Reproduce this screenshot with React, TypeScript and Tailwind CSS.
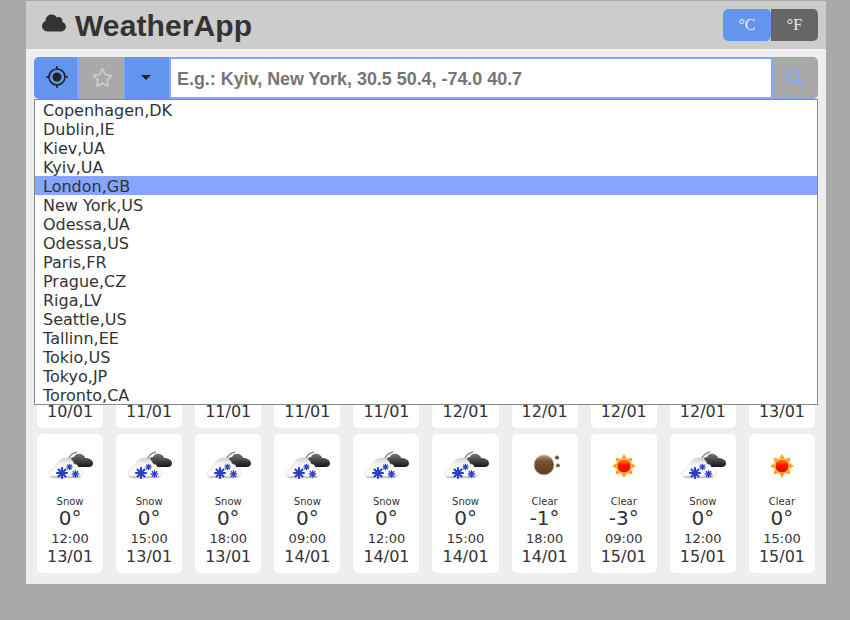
import { FaCloud, FaRegStar } from "react-icons/fa";

const cities = [
  "Copenhagen,DK",
  "Dublin,IE",
  "Kiev,UA",
  "Kyiv,UA",
  "London,GB",
  "New York,US",
  "Odessa,UA",
  "Odessa,US",
  "Paris,FR",
  "Prague,CZ",
  "Riga,LV",
  "Seattle,US",
  "Tallinn,EE",
  "Tokio,US",
  "Tokyo,JP",
  "Toronto,CA",
];

type Forecast = { kind: "snow" | "moon" | "sun"; label: string; temp: string; time: string; date: string };

const snow = (time: string, date: string): Forecast => ({ kind: "snow", label: "Snow", temp: "0°", time, date });

const topRow: Forecast[] = [
  snow("21:00", "10/01"),
  snow("09:00", "11/01"),
  snow("12:00", "11/01"),
  snow("15:00", "11/01"),
  snow("18:00", "11/01"),
  snow("09:00", "12/01"),
  snow("12:00", "12/01"),
  snow("15:00", "12/01"),
  snow("18:00", "12/01"),
  snow("09:00", "13/01"),
];

const bottomRow: Forecast[] = [
  snow("12:00", "13/01"),
  snow("15:00", "13/01"),
  snow("18:00", "13/01"),
  snow("09:00", "14/01"),
  snow("12:00", "14/01"),
  snow("15:00", "14/01"),
  { kind: "moon", label: "Clear", temp: "-1°", time: "18:00", date: "14/01" },
  { kind: "sun", label: "Clear", temp: "-3°", time: "09:00", date: "15/01" },
  snow("12:00", "15/01"),
  { kind: "sun", label: "Clear", temp: "0°", time: "15:00", date: "15/01" },
];

const Flake = ({ x, y, r }: { x: number; y: number; r: number }) => (
  <g stroke="#2a3fc9" strokeWidth={r * 0.36}>
    <line x1={x - r} y1={y} x2={x + r} y2={y} />
    <line x1={x} y1={y - r} x2={x} y2={y + r} />
    <line x1={x - r * 0.7} y1={y - r * 0.7} x2={x + r * 0.7} y2={y + r * 0.7} />
    <line x1={x + r * 0.7} y1={y - r * 0.7} x2={x - r * 0.7} y2={y + r * 0.7} />
  </g>
);

const SnowIcon = () => (
  <svg width="50" height="50" viewBox="0 0 50 50">
    <defs>
      <linearGradient id="snow-dark" x1="0" y1="0" x2="0" y2="1">
        <stop offset="0" stopColor="#777" />
        <stop offset="1" stopColor="#161616" />
      </linearGradient>
      <linearGradient id="snow-white" x1="0" y1="0" x2="0" y2="1">
        <stop offset="0" stopColor="#cfcfcf" />
        <stop offset="0.3" stopColor="#f6f6f6" />
        <stop offset="0.85" stopColor="#fff" />
        <stop offset="1" stopColor="#aaa" />
      </linearGradient>
    </defs>
    <path d="M23 21c1-5 4-8 9-9" fill="none" stroke="#888" strokeWidth="1.300" />
    <path
      d="M25 23c-1-3 1-6 4-6 1-3 4-4 7-3 2 1 4 2 4 4 4 0 8 2 8 5 0 3-2 4-5 4H31c-3 0-5-1-6-4z"
      fill="url(#snow-dark)"
    />
    <path
      d="M9 38c-3 0-5-2-5-4 0-3 2-5 5-5 0-2 1-4 3-5 1-4 5-6 9-6 4 0 7 2 8 6 2 0 4 1 4 3 3 1 5 3 5 6 0 3-3 5-6 5z"
      fill="url(#snow-white)"
      stroke="#d4d4d4"
      strokeWidth="0.6"
    />
    <Flake x={17} y={33} r={5.8} />
    <Flake x={24.500} y={27} r={3.2} />
    <Flake x={30.500} y={34} r={3.8} />
  </svg>
);

const MoonIcon = () => (
  <svg width="50" height="50" viewBox="0 0 50 50">
    <defs>
      <linearGradient id="moon-fill" x1="0" y1="0" x2="0" y2="1">
        <stop offset="0" stopColor="#b79f8c" />
        <stop offset="0.3" stopColor="#7a5433" />
        <stop offset="1" stopColor="#5d3d22" />
      </linearGradient>
    </defs>
    <circle cx="24" cy="25" r="10" fill="url(#moon-fill)" stroke="#c9b6a6" strokeWidth="0.7" />
    <path d="M37 15l1 1.600 1.700.4-1.200 1.200.2 1.700-1.700-.8-1.700.8.2-1.700-1.200-1.200 1.700-.4z" fill="#6b4a30" />
    <path d="M38 23l.9 1.400 1.600.4-1.100 1.100.2 1.600-1.600-.7-1.600.7.2-1.600-1.100-1.100 1.600-.4z" fill="#6b4a30" />
  </svg>
);

const SunIcon = () => (
  <svg width="50" height="50" viewBox="0 0 50 50">
    <defs>
      <linearGradient id="sun-fill" x1="0" y1="0" x2="0" y2="1">
        <stop offset="0" stopColor="#ff8a00" />
        <stop offset="0.45" stopColor="#ff1500" />
        <stop offset="1" stopColor="#f00000" />
      </linearGradient>
    </defs>
    <g fill="#ffa11a">
      {[0, 45, 90, 135, 180, 225, 270, 315].map((a) => (
        <path key={a} d="M25 14l-3 5h6z" transform={`rotate(${a} 25 26)`} />
      ))}
    </g>
    <circle cx="25" cy="26" r="7" fill="url(#sun-fill)" stroke="#ffc04d" strokeWidth="1" />
  </svg>
);

const ForecastCard = ({ item }: { item: Forecast }) => (
  <div className="h-[139px] rounded-[5px] bg-white flex flex-col items-center pt-[6px] text-[#333]">
    <div className="h-[50px] w-[50px] mb-[5px]">
      {item.kind === "snow" && <SnowIcon />}
      {item.kind === "moon" && <MoonIcon />}
      {item.kind === "sun" && <SunIcon />}
    </div>
    <div className="text-[10px] leading-[14px]">{item.label}</div>
    <div className="text-[20px] leading-[19px]">{item.temp}</div>
    <div className="text-[13px] leading-[19px] mt-px">{item.time}</div>
    <div className="text-[16px] leading-[18px]">{item.date}</div>
  </div>
);

const App = () => {
  return (
    <div className="min-h-[620px] bg-[#a9a9a9] pt-px font-['DejaVu_Sans',sans-serif]">
      <div className="relative w-[800px] ml-[26px] bg-[#eee]">
        <header className="h-[48px] bg-[#ccc] flex items-center justify-between pl-[16px] pr-[8px]">
          <div className="flex items-center gap-[9px] text-[#333]">
            <FaCloud className="w-[24px] h-[24px] -mt-[5px]" />
            <h1 className="font-['Liberation_Sans',sans-serif] font-bold text-[30px] leading-none mt-[2px] tracking-[0.1px]">
              WeatherApp
            </h1>
          </div>
          <div className="flex h-[32px] w-[95px] rounded-[5px] overflow-hidden font-['Liberation_Serif',serif] text-[16px] text-[#eee]">
            <div className="w-[48px] bg-[#6495ed] rounded-[5px] flex items-center justify-center">°C</div>
            <div className="flex-1 bg-[#666] flex items-center justify-center">°F</div>
          </div>
        </header>

        <div className="pt-[8px] px-[8px] pb-[11px]">
          <div className="flex h-[42px] w-[784px]">
            <button className="w-[45px] bg-[#6495ed] border-r-2 border-[#85a5ff] rounded-l-[5px] flex items-center justify-center pb-[2px] pl-[2px]">
              <svg width="24" height="24" viewBox="0 0 24 24" fill="none" stroke="#222" strokeWidth="1.600">
                <circle cx="12" cy="12" r="8" />
                <circle cx="12" cy="12" r="4.500" fill="#222" stroke="none" />
                <path d="M12 1v3M12 20v3M1 12h3M20 12h3" />
              </svg>
            </button>
            <button className="w-[44px] bg-[#a9a9a9] flex items-center justify-center pb-[2px] pl-[2px]">
              <FaRegStar className="w-[21px] h-[21px] text-[#ccc]" />
            </button>
            <button className="w-[46px] bg-[#6495ed] border-l-2 border-[#85a5ff] flex items-center justify-center pb-[2px] pr-[2px]">
              <div className="w-0 h-0 border-x-[5px] border-x-transparent border-t-[5px] border-t-[#222]" />
            </button>
            <div className="flex-1 bg-white border-2 border-[#85a5ff] flex items-center pl-[6px] pt-[2px] font-['Liberation_Sans',sans-serif] font-bold text-[17.9px] text-[#757575]">
              E.g.: Kyiv, New York, 30.5 50.4, -74.0 40.7
            </div>
            <button className="w-[45px] bg-[#a9a9a9] border border-l-0 border-[#85a5ff] rounded-r-[5px] flex items-center justify-center pb-[1px]">
              <svg width="20" height="20" viewBox="0 0 20 20" fill="none" stroke="#8fa8ff" strokeWidth="2.400">
                <circle cx="8" cy="8" r="6" />
                <path d="M12.500 12.500l6 6" />
              </svg>
            </button>
          </div>

          {/* current weather sits behind the open list */}
          <div className="h-[190px]" />

          <div className="grid grid-cols-10 gap-x-[13px] gap-y-[6px] px-[3px]">
            {topRow.concat(bottomRow).map((item, i) => (
              <ForecastCard key={i} item={item} />
            ))}
          </div>
        </div>

        <ul className="absolute left-[8px] top-[98px] w-[784px] h-[306px] bg-white border border-[#888] text-[16px] leading-[19px] text-[#333] overflow-hidden">
          {cities.map((city) => (
            <li key={city} className={city === "London,GB" ? "h-[19px] pt-px pl-[8px] bg-[#85a5ff]" : "h-[19px] pt-px pl-[8px]"}>
              {city}
            </li>
          ))}
        </ul>
      </div>
    </div>
  );
};

export default App;
